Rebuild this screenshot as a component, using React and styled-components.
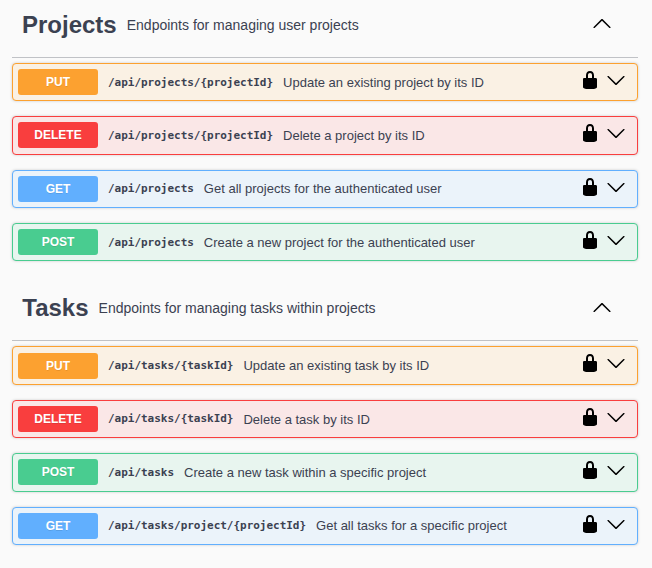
import React from "react";
import styled, { createGlobalStyle } from "styled-components";

const GlobalStyle = createGlobalStyle`
  * { box-sizing: border-box; }
  html, body { margin: 0; background: #fafafa; }
  body { color: #3b4151; font-family: "Liberation Sans", Arial, sans-serif; overflow: hidden; }
`;

const METHOD_COLORS = {
  PUT: { solid: "#fca130", tint: "#faf1e4" },
  DELETE: { solid: "#f93e3e", tint: "#fae7e7" },
  GET: { solid: "#61affe", tint: "#ebf3fa" },
  POST: { solid: "#49cc90", tint: "#e8f5ef" },
};

const Page = styled.main`
  width: 652px;
  height: 568px;
  padding: 0 14px 0 12px;
  overflow: hidden;
  background: #fafafa;
`;

const Sections = styled.div`
  margin-top: -7.2px;
`;

const TagHeader = styled.header`
  display: flex;
  align-items: center;
  height: 65px;
  margin-bottom: 5px;
  padding: 0 26px 3.4px ${(p) => p.$inset}px;
  border-bottom: 1px solid rgba(59, 65, 81, 0.3);
`;

const TagName = styled.h3`
  margin: 0;
  padding-top: 3.4px;
  font-size: 24px;
  line-height: 28px;
  font-weight: 700;
`;

const TagDescription = styled.p`
  flex: 1;
  margin: 0;
  padding: 3.4px 10px 0;
  font-size: 14px;
  line-height: 20px;
`;

const Icon = styled.svg`
  display: block;
  flex: none;
  width: 20px;
  height: 20px;
  fill: #000;
`;

const Operation = styled.article`
  display: flex;
  align-items: center;
  height: 38.4px;
  margin-bottom: 15px;
  padding: 5px 11px 5px 5px;
  border: 1px solid ${(p) => METHOD_COLORS[p.$method].solid};
  border-radius: 4px;
  background: ${(p) => METHOD_COLORS[p.$method].tint};
  box-shadow: 0 0 3px rgba(0, 0, 0, 0.19);
`;

const Method = styled.span`
  flex: none;
  width: 80px;
  height: 26px;
  border-radius: 3px;
  background: ${(p) => METHOD_COLORS[p.$method].solid};
  color: #fff;
  font: 700 12px/26px "Liberation Sans", Arial, sans-serif;
  text-align: center;
  text-shadow: 0 1px 0 rgba(0, 0, 0, 0.1);
`;

const Path = styled.code`
  padding: 1px 10px 0;
  font: 700 11px/16px "DejaVu Sans Mono", monospace;
  letter-spacing: -0.02px;
  white-space: nowrap;
`;

const Summary = styled.span`
  flex: 1;
  padding-top: 1.2px;
  font-size: 13px;
  line-height: 16px;
  white-space: nowrap;
`;

const Actions = styled.div`
  display: flex;
  gap: 6px;
  padding-bottom: 4.4px;
`;

const Lock = () => (
  <Icon viewBox="0 0 20 20">
    <path d="M15.8 8H14V5.6C14 2.703 12.665 1 10 1 7.334 1 6 2.703 6 5.6V8H4c-.553 0-1 .646-1 1.199V17c0 .549.428 1.139.951 1.307l1.197.387C5.672 18.861 6.55 19 7.1 19h5.8c.549 0 1.428-.139 1.951-.307l1.196-.387c.524-.167.953-.757.953-1.306V9.199C17 8.646 16.352 8 15.8 8zM12 8H8V5.199C8 3.754 8.797 3 10 3c1.203 0 2 .754 2 2.199V8z" />
  </Icon>
);

const ArrowDown = () => (
  <Icon viewBox="0 0 20 20">
    <path d="M17.418 6.109c.272-.268.709-.268.979 0s.271.701 0 .969l-7.908 7.83c-.27.268-.707.268-.979 0l-7.908-7.83c-.27-.268-.27-.701 0-.969s.709-.268.979 0L10 13.25l7.418-7.141z" />
  </Icon>
);

const ArrowUp = () => (
  <Icon viewBox="0 0 20 20">
    <path d="M17.418 14.908c.272.268.709.268.979 0s.271-.701 0-.969l-7.908-7.83c-.27-.268-.707-.268-.979 0l-7.908 7.83c-.27.268-.27.701 0 .969s.709.268.979 0L10 7.767l7.418 7.141z" />
  </Icon>
);

const TAGS = [
  {
    name: "Projects",
    description: "Endpoints for managing user projects",
    inset: 10,
    operations: [
      ["PUT", "/api/projects/{projectId}", "Update an existing project by its ID"],
      ["DELETE", "/api/projects/{projectId}", "Delete a project by its ID"],
      ["GET", "/api/projects", "Get all projects for the authenticated user"],
      ["POST", "/api/projects", "Create a new project for the authenticated user"],
    ],
  },
  {
    name: "Tasks",
    description: "Endpoints for managing tasks within projects",
    inset: 10.3,
    operations: [
      ["PUT", "/api/tasks/{taskId}", "Update an existing task by its ID"],
      ["DELETE", "/api/tasks/{taskId}", "Delete a task by its ID"],
      ["POST", "/api/tasks", "Create a new task within a specific project"],
      ["GET", "/api/tasks/project/{projectId}", "Get all tasks for a specific project"],
    ],
  },
];

export default function App() {
  return (
    <>
      <GlobalStyle />
      <Page>
        <Sections>
          {TAGS.map((tag) => (
            <section key={tag.name}>
              <TagHeader $inset={tag.inset}>
                <TagName>{tag.name}</TagName>
                <TagDescription>{tag.description}</TagDescription>
                <ArrowUp />
              </TagHeader>
              {tag.operations.map(([method, path, summary]) => (
                <Operation key={method} $method={method}>
                  <Method $method={method}>{method}</Method>
                  <Path>{path}</Path>
                  <Summary>{summary}</Summary>
                  <Actions>
                    <Lock />
                    <ArrowDown />
                  </Actions>
                </Operation>
              ))}
            </section>
          ))}
        </Sections>
      </Page>
    </>
  );
}
